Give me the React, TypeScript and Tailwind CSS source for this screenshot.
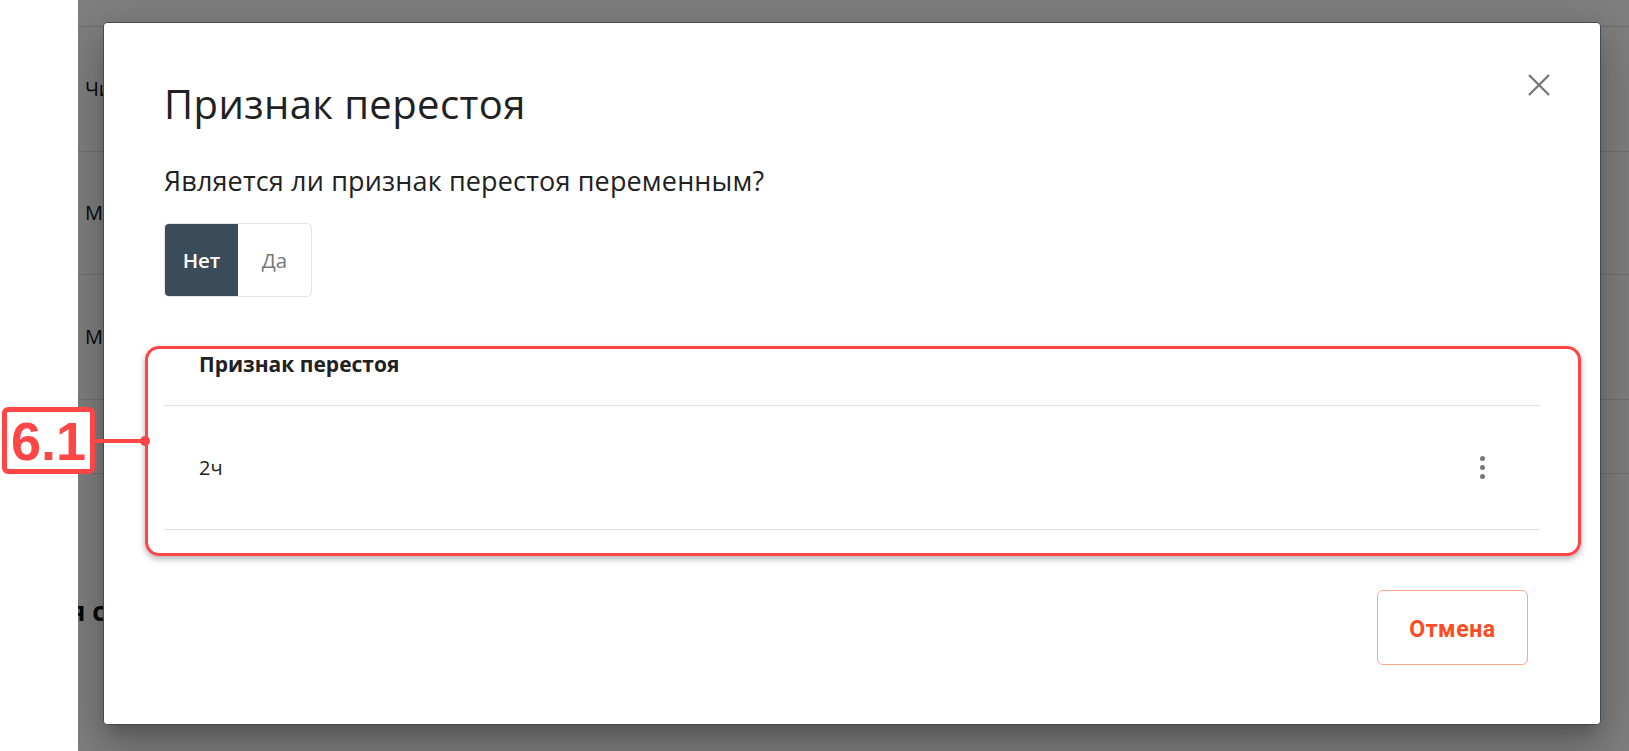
import React from "react";

const sans = { fontFamily: '"Open Sans", "Noto Sans", sans-serif' };

export default function App() {
  return (
    <div className="relative flex h-[751px] w-[1629px] overflow-hidden bg-white" style={sans}>
      <div className="w-[78px] shrink-0 bg-white" />
      <div className="relative flex-1 overflow-hidden bg-white">
        {/* background page */}
        <div className="flex flex-col text-[20px] text-[#111]">
          <div className="h-[27px] border-b border-[#e0e0e0]" />
          <div className="flex h-[125px] items-center border-b border-[#e0e0e0] pl-[7px]">Число</div>
          <div className="flex h-[123px] items-center border-b border-[#e0e0e0] pl-[7px]">Мера</div>
          <div className="flex h-[125px] items-center border-b border-[#e0e0e0] pl-[7px]">Мера</div>
          <div className="h-[74px] border-b border-[#e0e0e0]" />
          <div className="ml-[-8px] mt-[118px] whitespace-nowrap text-[26px] font-bold">я сводка</div>
        </div>
        <div className="absolute inset-0 bg-black/50" />

        {/* modal */}
        <div className="absolute left-[25px] top-[22px] flex h-[703px] w-[1498px] flex-col rounded-[4px] border border-[#3f4b55] bg-white px-[60px] shadow-[0_11px_15px_-7px_rgba(0,0,0,0.2),0_24px_38px_3px_rgba(0,0,0,0.14),0_9px_46px_8px_rgba(0,0,0,0.12)]">
          <button className="absolute right-[49px] top-[50px] flex h-[24px] w-[24px] items-center justify-center text-[#757575]">
            <svg width="22" height="22" viewBox="0 0 22 22" fill="none" stroke="currentColor" strokeWidth="2.2">
              <path d="M1 1L21 21M21 1L1 21" />
            </svg>
          </button>
          <h2 className="mt-[57px] text-[40px] font-normal leading-[48px] tracking-[0.4px] text-[#212121]">Признак перестоя</h2>
          <p className="mt-[36px] text-[27px] leading-[34px] tracking-[0.15px] text-[#212121]">Является ли признак перестоя переменным?</p>
          <div className="mt-[25px] flex h-[74px] w-[148px] overflow-hidden rounded-[5px] border border-[#e4e4e4] text-[20.5px]">
            <div className="flex w-[73px] items-center justify-center bg-[#3a4b5a] font-semibold text-white">Нет</div>
            <div className="flex flex-1 items-center justify-center text-[#777]">Да</div>
          </div>
          <div className="mt-[28px] flex flex-col">
            <div className="flex h-[81px] items-center border-b border-[#e0e0e0] pl-[35px] text-[21px] font-bold text-[#212121]">
              Признак перестоя
            </div>
            <div className="flex h-[124px] items-center justify-between border-b border-[#e0e0e0] pl-[35px] pr-[55px] text-[20px] text-[#212121]">
              <span>2ч</span>
              <span className="flex flex-col gap-[4px]">
                <span className="h-[5px] w-[5px] rounded-full bg-[#777]" />
                <span className="h-[5px] w-[5px] rounded-full bg-[#777]" />
                <span className="h-[5px] w-[5px] rounded-full bg-[#777]" />
              </span>
            </div>
          </div>
          <div className="mt-[60px] flex justify-end pr-[12px]">
            <button
              className="flex h-[75px] w-[151px] items-center justify-center rounded-[6px] border border-[#ffa58e] pt-[5px] text-[23px] font-bold tracking-[0.6px] text-[#ff4b24]"
              style={{ fontFamily: 'Roboto, "Noto Sans", sans-serif' }}
            >
              Отмена
            </button>
          </div>
        </div>
      </div>

      {/* annotation */}
      <div className="absolute left-[145px] top-[346px] h-[210px] w-[1436px] rounded-[14px] border-[3px] border-[#ff4646] shadow-[0_3px_6px_rgba(0,0,0,0.3)]" />
      <div className="absolute left-[95px] top-[439px] h-[4px] w-[50px] bg-[#ff4646]" />
      <div className="absolute left-[140px] top-[436px] h-[10px] w-[10px] rounded-full bg-[#ff4646]" />
      <div
        className="absolute left-[2px] top-[407px] flex h-[67px] w-[93px] items-center justify-center rounded-[6px] border-[5px] border-[#ff4646] bg-white text-[54px] font-bold leading-none text-[#ff4646]"
        style={{ fontFamily: '"Liberation Sans", Arial, sans-serif' }}
      >
        6.1
      </div>
    </div>
  );
}
